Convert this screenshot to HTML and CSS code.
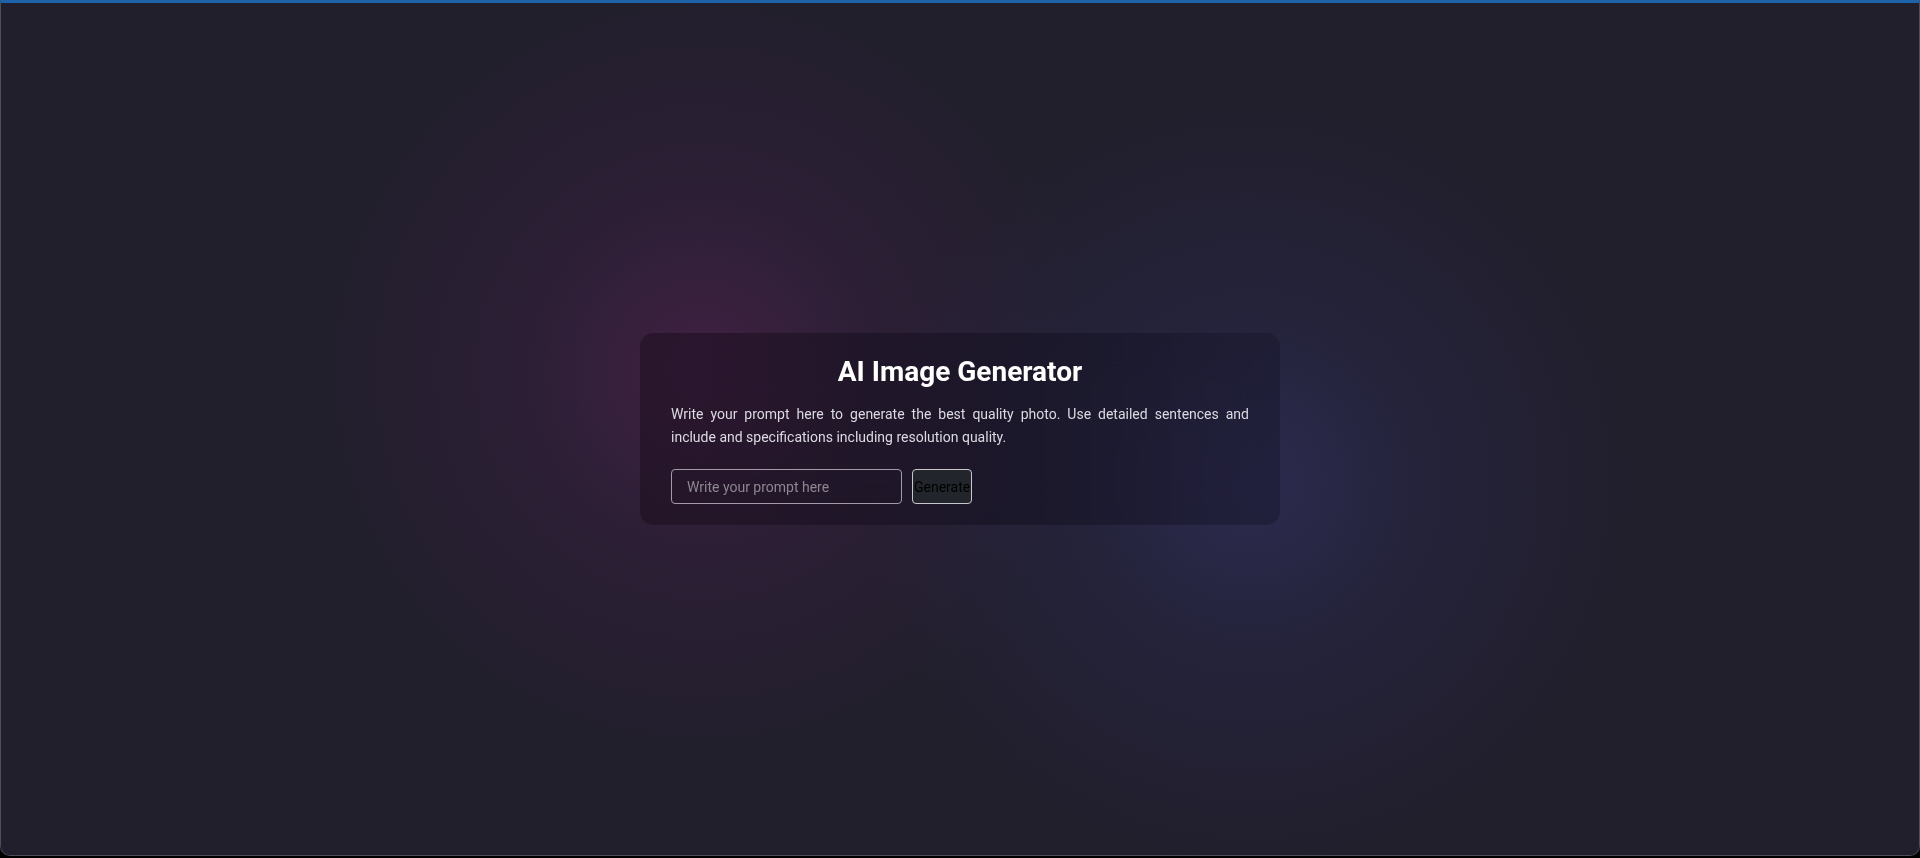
FILE: index.html
```html
<!DOCTYPE html>
<html lang="en">
<head>
<meta charset="UTF-8">
<title>AI Image Generator</title>
<link rel="stylesheet" href="styles.css">
</head>
<body>
<div class="window">
  <main class="stage">
    <div class="glow glow-pink"></div>
    <div class="glow glow-blue"></div>
    <section class="card">
      <h1 class="title">AI Image Generator</h1>
      <p class="desc">Write your prompt here to generate the best quality photo. Use detailed sentences and include and specifications including resolution quality.</p>
      <form class="prompt-row" onsubmit="return false">
        <input class="prompt-input" type="text" placeholder="Write your prompt here">
        <button class="gen-btn" type="submit">Generate</button>
      </form>
    </section>
  </main>
</div>
</body>
</html>
```

FILE: styles.css
```css
* { box-sizing: border-box; }
html, body { margin: 0; padding: 0; height: 100%; }
body {
  background: #000;
  font-family: Roboto, "Liberation Sans", sans-serif;
  overflow: hidden;
}
.window {
  height: 856px;
  border: 1px solid #4d4d57;
  border-top: 3px solid #1c63a9;
  border-radius: 0 0 10px 10px;
  overflow: hidden;
  background: #211f2c;
}
.stage {
  position: relative;
  height: 100%;
  display: flex;
  align-items: center;
  justify-content: center;
  background: #211f2c;
}
.glow {
  position: absolute;
  border-radius: 50%;
  pointer-events: none;
}
.glow-pink {
  left: 290px; top: -40px;
  width: 820px; height: 820px;
  background: radial-gradient(circle, rgba(90,35,85,0.55) 0%, rgba(70,30,75,0.3) 30%, rgba(33,31,44,0) 68%);
}
.glow-blue {
  left: 850px; top: 80px;
  width: 800px; height: 800px;
  background: radial-gradient(circle, rgba(55,55,115,0.5) 0%, rgba(45,45,95,0.28) 30%, rgba(33,31,44,0) 68%);
}
.card {
  position: relative;
  width: 640px;
  padding: 22px 31px 21px;
  border-radius: 14px;
  background: linear-gradient(90deg, rgba(28,14,30,0.55) 0%, rgba(20,16,32,0.55) 55%, rgba(22,22,42,0.45) 100%);
  backdrop-filter: blur(20px);
}
.title {
  margin: 0;
  font-size: 28px;
  line-height: 34px;
  font-weight: 700;
  color: #ffffff;
  text-align: center;
}
.desc {
  margin: 14px 0 0;
  font-size: 14px;
  line-height: 23px;
  color: #dcdae2;
  text-align: justify;
}
.prompt-row {
  display: flex;
  gap: 10px;
  margin-top: 20px;
}
.prompt-input {
  width: 231px;
  height: 35px;
  padding: 0 15px;
  border: 1px solid #a39ba8;
  border-radius: 4px;
  background: transparent;
  color: #ddd;
  font-family: Roboto, "Liberation Sans", sans-serif;
  font-size: 14px;
  outline: none;
}
.prompt-input::placeholder { color: #8d8791; }
.gen-btn {
  height: 35px;
  padding: 0 1px;
  border: 1px solid #c9c7cc;
  border-radius: 4px;
  background: #22252c;
  color: #000;
  font-family: Roboto, "Liberation Sans", sans-serif;
  font-size: 14px;
}
```
